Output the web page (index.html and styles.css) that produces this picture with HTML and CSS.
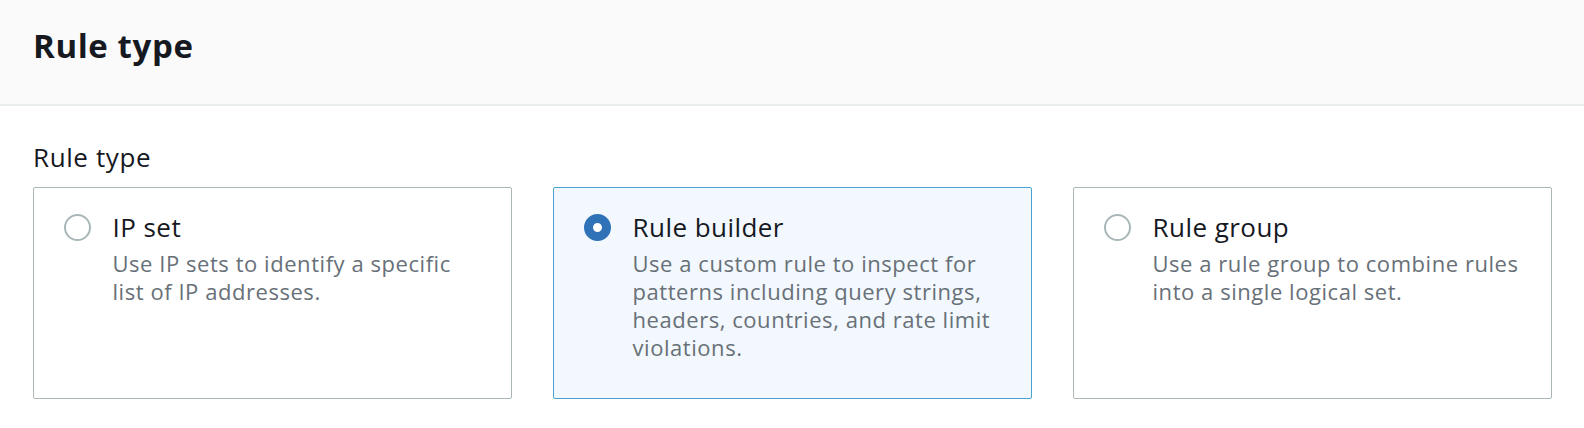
FILE: index.html
```html
<!DOCTYPE html>
<html>
<head>
<meta charset="utf-8">
<link rel="stylesheet" href="styles.css">
</head>
<body>
<div class="panel">
  <div class="panel-header">
    <h2 class="panel-title">Rule type</h2>
  </div>
  <div class="panel-body">
    <div class="field-label">Rule type</div>
    <div class="tiles">
      <div class="tile">
        <span class="radio"></span>
        <div class="tile-text">
          <div class="tile-title">IP set</div>
          <div class="tile-desc">Use IP sets to identify a specific list of IP addresses.</div>
        </div>
      </div>
      <div class="tile tile-selected">
        <span class="radio radio-checked"></span>
        <div class="tile-text">
          <div class="tile-title">Rule builder</div>
          <div class="tile-desc">Use a custom rule to inspect for patterns including query strings, headers, countries, and rate limit violations.</div>
        </div>
      </div>
      <div class="tile">
        <span class="radio"></span>
        <div class="tile-text">
          <div class="tile-title">Rule group</div>
          <div class="tile-desc">Use a rule group to combine rules into a single logical set.</div>
        </div>
      </div>
    </div>
  </div>
</div>
</body>
</html>
```
FILE: styles.css
```css
html, body {
  margin: 0;
  padding: 0;
  background: #ffffff;
}
body {
  font-family: "Open Sans", "Noto Sans", sans-serif;
  color: #16191f;
}
.panel-header {
  background: #fafafa;
  height: 106px;
  border-bottom: 2px solid #eaeded;
  box-sizing: border-box;
  padding: 26px 33px 0;
}
.panel-title {
  margin: 0;
  font-size: 33px;
  font-weight: 700;
  line-height: 40px;
  letter-spacing: 0.6px;
  color: #16191f;
}
.panel-body {
  padding: 35px 33px 0;
}
.field-label {
  font-size: 26px;
  line-height: 32px;
  letter-spacing: 0.6px;
  color: #16191f;
  margin-bottom: 14px;
}
.tiles {
  display: grid;
  grid-template-columns: 479px 479px 479px;
  column-gap: 41px;
}
.tile {
  height: 212px;
  box-sizing: border-box;
  border: 1px solid #aab7b8;
  border-radius: 2px;
  padding: 21px 28px 0 30px;
  display: flex;
  align-items: flex-start;
  gap: 21.5px;
}
.tile-selected {
  border-color: #4aa3ce;
  background: #f2f8fd;
}
.radio {
  flex: 0 0 auto;
  width: 27px;
  height: 27px;
  box-sizing: border-box;
  border: 2px solid #aab7b8;
  border-radius: 50%;
  background: #ffffff;
  margin-top: 5px;
}
.radio-checked {
  border: 9px solid #2f72b8;
}
.tile-title {
  font-size: 26px;
  line-height: 36px;
  letter-spacing: 0.45px;
  color: #16191f;
}
.tile-desc {
  margin-top: 4px;
  font-size: 22px;
  line-height: 28px;
  letter-spacing: 0.55px;
  color: #687078;
}
```
